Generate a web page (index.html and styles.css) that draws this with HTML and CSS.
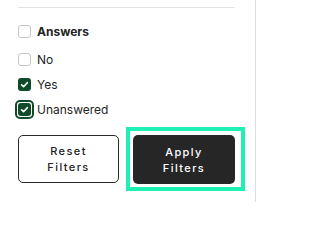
FILE: index.html
```html
<!DOCTYPE html>
<html lang="en">
<head>
<meta charset="utf-8">
<title>Filters</title>
<link rel="stylesheet" href="styles.css">
</head>
<body>
<div class="panel">
  <div class="divider"></div>
  <div class="group">
    <label class="row row-head">
      <span class="box"></span>
      <span class="label label-bold">Answers</span>
    </label>
    <label class="row">
      <span class="box"></span>
      <span class="label">No</span>
    </label>
    <label class="row">
      <span class="box box-checked">
        <svg viewBox="0 0 13 13" width="13" height="13"><path d="M3.6 6.8 L5.6 8.7 L9.4 4.6" fill="none" stroke="#fff" stroke-width="1.6" stroke-linecap="round" stroke-linejoin="round"/></svg>
      </span>
      <span class="label">Yes</span>
    </label>
    <label class="row">
      <span class="focus-box">
        <span class="box box-checked">
          <svg viewBox="0 0 13 13" width="13" height="13"><path d="M3.6 6.8 L5.6 8.7 L9.4 4.6" fill="none" stroke="#fff" stroke-width="1.6" stroke-linecap="round" stroke-linejoin="round"/></svg>
        </span>
      </span>
      <span class="label">Unanswered</span>
    </label>
  </div>
  <div class="actions">
    <button class="btn btn-outline">Reset<br>Filters</button>
    <div class="focus-ring">
      <button class="btn btn-dark">Apply<br>Filters</button>
    </div>
  </div>
</div>
</body>
</html>
```

FILE: styles.css
```css
html, body {
  margin: 0;
  padding: 0;
  background: #ffffff;
}

body {
  font-family: Inter, "Noto Sans", "Liberation Sans", sans-serif;
  color: #222222;
  width: 258px;
  height: 202px;
  overflow: hidden;
}

.panel {
  box-sizing: border-box;
  width: 256px;
  height: 202px;
  padding: 7px 20px 0 18px;
  border-right: 1px solid #dddddd;
}

.divider {
  height: 1px;
  background: #e2e2e2;
}

.group {
  display: flex;
  flex-direction: column;
  gap: 6px;
  margin-top: 14px;
}

.row {
  display: flex;
  align-items: center;
  height: 19px;
  gap: 6px;
}

.row-head {
  margin-bottom: 3px;
}

.box {
  box-sizing: border-box;
  width: 13px;
  height: 13px;
  border: 1px solid #c4c4c4;
  border-radius: 3px;
  background: #ffffff;
  display: flex;
  align-items: center;
  justify-content: center;
  flex: none;
}

.box svg {
  display: block;
}

.box-checked {
  border: none;
  background: #0f4a2b;
}

.focus-box {
  box-sizing: border-box;
  width: 19px;
  height: 19px;
  margin: 0 -3px;
  border: 2px solid #0f4a2b;
  border-radius: 5px;
  display: flex;
  align-items: center;
  justify-content: center;
  flex: none;
}

.label {
  font-size: 12px;
  line-height: 19px;
  color: #242424;
}

.label-bold {
  font-weight: 700;
}

.actions {
  display: flex;
  align-items: flex-start;
  gap: 7px;
  margin-top: 16px;
}

.btn {
  box-sizing: border-box;
  font-family: Inter, "Noto Sans", "Liberation Sans", sans-serif;
  font-size: 11px;
  font-weight: 500;
  line-height: 16px;
  letter-spacing: 1.4px;
  text-align: center;
  border-radius: 5px;
  padding: 0;
  margin: 0;
  flex: none;
}

.btn-outline {
  width: 101px;
  height: 48px;
  background: #ffffff;
  color: #222222;
  border: 1px solid #2a2a2a;
}

.focus-ring {
  flex: none;
  margin-top: -8px;
  padding: 4px 6px 3px 3px;
  border: 4px solid #1ff0b4;
}

.btn-dark {
  display: block;
  width: 102px;
  height: 49px;
  background: #262626;
  color: #ffffff;
  border: none;
}
```
